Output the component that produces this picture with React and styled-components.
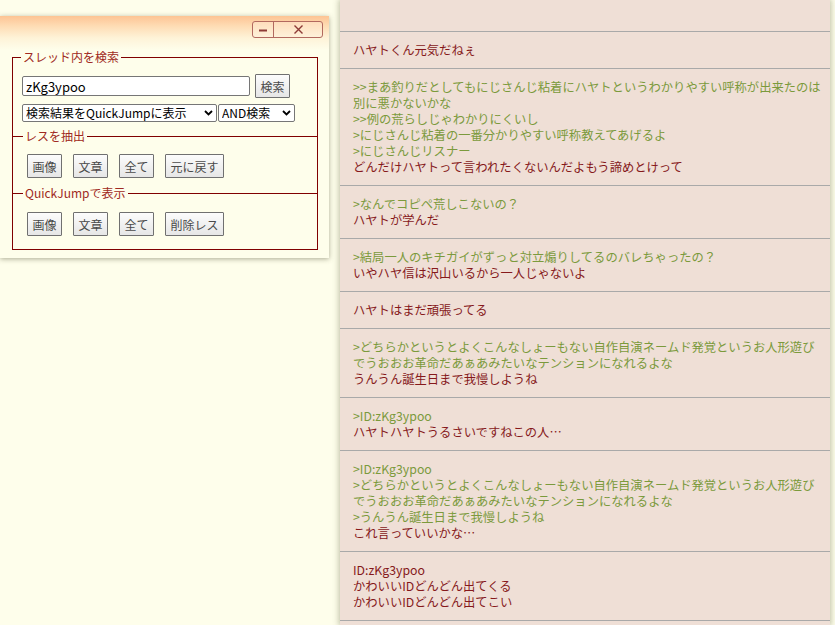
import React from "react";
import styled, { createGlobalStyle } from "styled-components";

const posts = [
  [["t", "ハヤトくん元気だねぇ"]],
  [
    ["q", ">>まあ釣りだとしてもにじさんじ粘着にハヤトというわかりやすい呼称が出来たのは別に悪かないかな"],
    ["q", ">>例の荒らしじゃわかりにくいし"],
    ["q", ">にじさんじ粘着の一番分かりやすい呼称教えてあげるよ"],
    ["q", ">にじさんじリスナー"],
    ["t", "どんだけハヤトって言われたくないんだよもう諦めとけって"],
  ],
  [
    ["q", ">なんでコピペ荒しこないの？"],
    ["t", "ハヤトが学んだ"],
  ],
  [
    ["q", ">結局一人のキチガイがずっと対立煽りしてるのバレちゃったの？"],
    ["t", "いやハヤ信は沢山いるから一人じゃないよ"],
  ],
  [["t", "ハヤトはまだ頑張ってる"]],
  [
    ["q", ">どちらかというとよくこんなしょーもない自作自演ネームド発覚というお人形遊びでうおおお革命だあぁあみたいなテンションになれるよな"],
    ["t", "うんうん誕生日まで我慢しようね"],
  ],
  [
    ["q", ">ID:zKg3ypoo"],
    ["t", "ハヤトハヤトうるさいですねこの人…"],
  ],
  [
    ["q", ">ID:zKg3ypoo"],
    ["q", ">どちらかというとよくこんなしょーもない自作自演ネームド発覚というお人形遊びでうおおお革命だあぁあみたいなテンションになれるよな"],
    ["q", ">うんうん誕生日まで我慢しようね"],
    ["t", "これ言っていいかな…"],
  ],
  [
    ["t", "ID:zKg3ypoo"],
    ["t", "かわいいIDどんどん出てくる"],
    ["t", "かわいいIDどんどん出てこい"],
  ],
];

function Chevron() {
  return (
    <ArrowIcon width="9" height="6" viewBox="0 0 9 6">
      <path d="M1 1l3.5 3.5L8 1" fill="none" stroke="#000" strokeWidth="1.8" />
    </ArrowIcon>
  );
}

export default function App() {
  return (
    <>
      <GlobalStyle />
      <Page>
        <Thread>
          <ScrolledPost />
          {posts.map((lines, i) => (
            <Post key={i}>
              {lines.map(([kind, text], j) => (
                <Line key={j} $quote={kind === "q"}>
                  {text}
                </Line>
              ))}
            </Post>
          ))}
          <Post />
        </Thread>

        <SearchWindow>
          <TitleBar>
            <WindowButtons>
              <WinButton $w={20}>
                <svg width="10" height="10" viewBox="0 0 10 10">
                  <path d="M1 5.5h8" stroke="#8e3b36" strokeWidth="2" />
                </svg>
              </WinButton>
              <WinButton $w={48} $last>
                <svg width="11" height="11" viewBox="0 0 11 11">
                  <path
                    d="M1.5 1.5l8 8M9.5 1.5l-8 8"
                    stroke="#8e3b36"
                    strokeWidth="1.4"
                  />
                </svg>
              </WinButton>
            </WindowButtons>
          </TitleBar>

          <OuterSet>
            <Legend>スレッド内を検索</Legend>
            <SearchArea>
              <InputRow>
                <SearchInput defaultValue="zKg3ypoo" />
                <SmallButton>検索</SmallButton>
              </InputRow>
              <SelectRow>
                <SelectBox $w={195}>
                  <Select defaultValue="qj">
                    <option value="qj">検索結果をQuickJumpに表示</option>
                    <option value="ex">検索結果を抽出</option>
                  </Select>
                  <Chevron />
                </SelectBox>
                <SelectBox $w={77}>
                  <Select defaultValue="and">
                    <option value="and">AND検索</option>
                    <option value="or">OR検索</option>
                  </Select>
                  <Chevron />
                </SelectBox>
              </SelectRow>
            </SearchArea>

            <InnerSet>
              <InnerLegend>レスを抽出</InnerLegend>
              <ButtonRow>
                <SmallButton>画像</SmallButton>
                <SmallButton>文章</SmallButton>
                <SmallButton>全て</SmallButton>
                <SmallButton>元に戻す</SmallButton>
              </ButtonRow>
            </InnerSet>

            <InnerSet $last>
              <InnerLegend>QuickJumpで表示</InnerLegend>
              <ButtonRow>
                <SmallButton>画像</SmallButton>
                <SmallButton>文章</SmallButton>
                <SmallButton>全て</SmallButton>
                <SmallButton>削除レス</SmallButton>
              </ButtonRow>
            </InnerSet>
          </OuterSet>
        </SearchWindow>
      </Page>
    </>
  );
}

const GlobalStyle = createGlobalStyle`
  html, body {
    margin: 0;
    padding: 0;
    background: #fefeeb;
    overflow: hidden;
  }
  body {
    font-family: "Noto Sans CJK JP", "Noto Sans", sans-serif;
  }
`;

const Page = styled.div`
  position: relative;
  height: 625px;
  display: flex;
  padding-left: 340px;
`;

const Thread = styled.div`
  width: 490px;
  height: 100%;
  background: #efdfd6;
  box-shadow: 0 0 6px 1px rgba(110, 115, 80, 0.45);
  display: flex;
  flex-direction: column;
`;

const ScrolledPost = styled.div`
  height: 31px;
  flex-shrink: 0;
  border-bottom: 1px solid #a9a9a9;
`;

const Post = styled.div`
  flex-shrink: 0;
  padding: 10px 5px 10px 13px;
  border-bottom: 1px solid #a9a9a9;
  font-size: 12.3px;
  line-height: 16px;
`;

const Line = styled.div`
  color: ${(p) => (p.$quote ? "#7b9a3c" : "#86191b")};
`;

const SearchWindow = styled.div`
  position: absolute;
  left: 0;
  top: 16px;
  width: 329px;
  height: 242px;
  background: linear-gradient(#fdc494 0px, #fedcb4 10px, #fef3d8 22px, #fefeeb 34px);
  box-shadow: 0 1px 5px rgba(70, 70, 40, 0.45);
  font-family: "Noto Sans CJK JP", sans-serif;
`;

const TitleBar = styled.div`
  height: 34px;
  display: flex;
  justify-content: flex-end;
  align-items: flex-start;
  padding: 5px 6px 0 0;
  box-sizing: border-box;
`;

const WindowButtons = styled.div`
  display: flex;
  height: 17px;
  border: 1px solid #b2695f;
  border-radius: 3px;
  box-sizing: border-box;
  background: rgba(255, 240, 225, 0.35);
`;

const WinButton = styled.div`
  width: ${(p) => p.$w}px;
  display: flex;
  align-items: center;
  justify-content: center;
  border-right: ${(p) => (p.$last ? "none" : "1px solid #b2695f")};
`;

const OuterSet = styled.fieldset`
  margin: 0 0 0 12px;
  width: 306px;
  box-sizing: border-box;
  padding: 0;
  border: 1px solid #800000;
  min-width: 0;
`;

const Legend = styled.legend`
  margin-left: 8px;
  padding: 0 2px;
  font-size: 12px;
  line-height: 14px;
  color: #a02a22;
`;

const InnerLegend = styled(Legend)`
  margin-left: -4px;
`;

const SearchArea = styled.div`
  padding: 10px 9px 7px;
  display: flex;
  flex-direction: column;
  gap: 6px;
`;

const InputRow = styled.div`
  display: flex;
  align-items: center;
  gap: 5px;
`;

const SearchInput = styled.input`
  width: 228px;
  height: 20px;
  box-sizing: border-box;
  border: 1px solid #767676;
  border-radius: 2px;
  padding: 0 3px;
  font-family: "Noto Sans CJK JP", sans-serif;
  font-size: 13px;
  color: #000;
  background: #fff;
  outline: none;
`;

const SelectRow = styled.div`
  display: flex;
  gap: 1px;
  height: 18px;
`;

const SelectBox = styled.div`
  position: relative;
  display: flex;
  width: ${(p) => p.$w}px;
  height: 18px;
`;

const Select = styled.select`
  appearance: none;
  display: block;
  width: 100%;
  height: 100%;
  box-sizing: border-box;
  border: 1px solid #767676;
  border-radius: 2px;
  padding: 0 0 0 3px;
  font-family: "Noto Sans CJK JP", sans-serif;
  font-size: 12px;
  line-height: 16px;
  color: #000;
  background: #fff;
  outline: none;
`;

const ArrowIcon = styled.svg`
  position: absolute;
  right: 4px;
  top: 6px;
  pointer-events: none;
`;

const InnerSet = styled.fieldset`
  margin: 0;
  padding: ${(p) => (p.$last ? "12px 14px 13px" : "11px 14px 8px")};
  border: none;
  border-top: 1px solid #800000;
  min-width: 0;
`;

const ButtonRow = styled.div`
  display: flex;
  gap: 11px;
`;

const SmallButton = styled.button`
  height: 24px;
  padding: 0 4.5px;
  box-sizing: border-box;
  border: 1px solid #707070;
  border-radius: 1px;
  background: linear-gradient(#fcfcfc, #e6e6e6);
  font-family: "Noto Sans CJK JP", sans-serif;
  font-size: 12px;
  color: #4a4a4a;
  cursor: pointer;
  white-space: nowrap;
`;
